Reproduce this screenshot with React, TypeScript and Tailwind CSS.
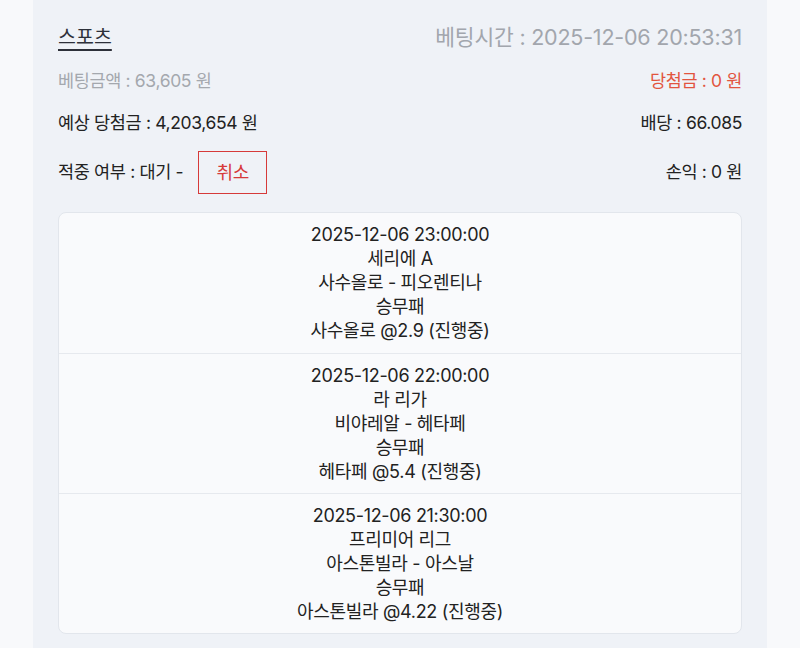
import React from 'react';

type Pick = {
  time: string;
  league: string;
  match: string;
  market: string;
  choice: string;
};

const picks: Pick[] = [
  {
    time: '2025-12-06 23:00:00',
    league: '세리에 A',
    match: '사수올로 - 피오렌티나',
    market: '승무패',
    choice: '사수올로 @2.9 (진행중)',
  },
  {
    time: '2025-12-06 22:00:00',
    league: '라 리가',
    match: '비야레알 - 헤타페',
    market: '승무패',
    choice: '헤타페 @5.4 (진행중)',
  },
  {
    time: '2025-12-06 21:30:00',
    league: '프리미어 리그',
    match: '아스톤빌라 - 아스날',
    market: '승무패',
    choice: '아스톤빌라 @4.22 (진행중)',
  },
];

const font = { fontFamily: 'Inter, "Noto Sans CJK KR", sans-serif' };

export default function App() {
  return (
    <div className="min-h-[648px] w-[800px] bg-[#f8f9fb]" style={font}>
      <div className="mx-[33px] min-h-[648px] bg-[#eff2f7] px-[25px] pt-[22px] text-[#222]">
        {/* header */}
        <div className="flex h-[30px] items-center justify-between">
          <span className="text-[19.5px] leading-[24px] text-[#2d3039] underline underline-offset-[5px] decoration-[1.5px]">
            스포츠
          </span>
          <span className="text-[21.5px] tracking-[-0.01em] text-[#a2a6ad]">베팅시간 : 2025-12-06 20:53:31</span>
        </div>

        <div className="mt-[14px] flex h-[30px] items-center justify-between text-[17.5px] tracking-[-0.02em]">
          <span className="text-[#a4a8ae]">베팅금액 : 63,605 원</span>
          <span className="text-[#e2553f]">당첨금 : 0 원</span>
        </div>

        <div className="mt-[12px] flex h-[30px] items-center justify-between text-[17.5px] tracking-[-0.02em]">
          <span>예상 당첨금 : 4,203,654 원</span>
          <span>배당 : 66.085</span>
        </div>

        <div className="mt-[13px] flex h-[43px] items-center justify-between text-[17.5px] tracking-[-0.02em]">
          <div className="flex items-center">
            <span>적중 여부 : 대기 -</span>
            <button className="ml-[15px] h-[43px] w-[69px] border-[1.5px] border-[#d63a3a] text-[18px] text-[#d63a3a]">
              취소
            </button>
          </div>
          <span>손익 : 0 원</span>
        </div>

        {/* picks */}
        <div className="mt-[18px] overflow-hidden rounded-[8px] border border-[#e2e6ec] bg-[#f9fafc] tracking-[-0.02em]">
          {picks.map((p, i) => (
            <div
              key={p.time}
              className={`flex h-[140px] flex-col items-center justify-center text-[18px] leading-[24px] ${i > 0 ? 'border-t border-[#e6e9ee]' : ''}`}
            >
              <span>{p.time}</span>
              <span>{p.league}</span>
              <span>{p.match}</span>
              <span>{p.market}</span>
              <span>{p.choice}</span>
            </div>
          ))}
        </div>
      </div>
    </div>
  );
}
